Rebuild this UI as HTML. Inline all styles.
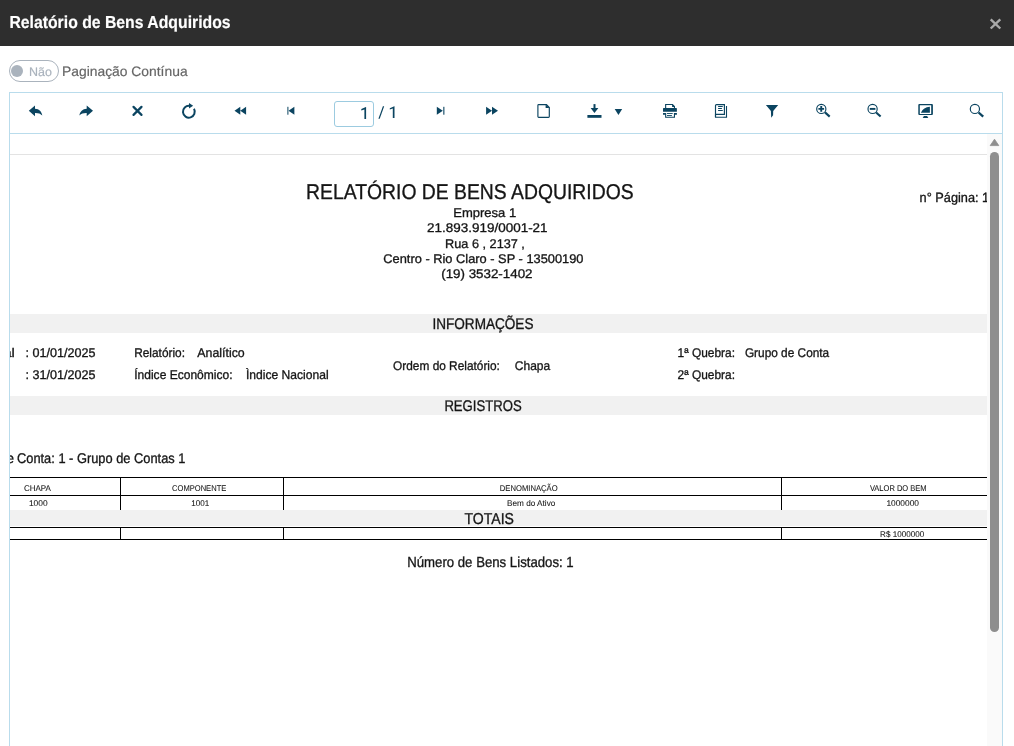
<!DOCTYPE html>
<html><head><meta charset="utf-8">
<style>
html,body{margin:0;padding:0;width:1014px;height:746px;overflow:hidden;background:#fff;font-family:"Liberation Sans",sans-serif;}
.abs{position:absolute;}
#hdr{left:0;top:0;width:1014px;height:46px;background:#2e2e2e;}
#pill{left:9px;top:60px;width:48px;height:20px;border:1px solid #aab3bd;border-radius:11px;box-sizing:content-box;}
#knob{left:11px;top:65px;width:12px;height:12px;border-radius:50%;background:#aab3bd;}
#box{left:9px;top:92px;width:992px;height:700px;border:1px solid #b9dcec;box-sizing:content-box;}
#tbline{left:10px;top:133px;width:992px;height:1px;background:#b9dcec;}
#pginput{left:334px;top:101px;width:38px;height:24px;border:1px solid #9ccbe0;border-radius:3px;}
#track{left:987px;top:134px;width:15px;height:612px;background:#fafafa;}
#thumb{left:990px;top:152px;width:9px;height:480px;border-radius:4.5px;background:#8e8e8e;}
#gline{left:10px;top:154px;width:977px;height:1px;background:#e3e3e3;}
.band{left:10px;width:977px;background:#f1f1f1;}
</style></head><body>
<div id="hdr" class="abs"></div>
<div id="pill" class="abs"></div>
<div id="knob" class="abs"></div>
<div id="box" class="abs"></div>
<div id="tbline" class="abs"></div>
<div id="pginput" class="abs"></div>
<div id="gline" class="abs"></div>
<div class="abs band" style="top:314px;height:19px"></div>
<div class="abs band" style="top:396px;height:19px"></div>
<div class="abs band" style="top:510px;height:16px"></div>
<div class="abs" style="left:10px;top:477px;width:977px;height:1px;background:#000"></div>
<div class="abs" style="left:10px;top:495px;width:977px;height:1px;background:#000"></div>
<div class="abs" style="left:10px;top:527px;width:977px;height:1px;background:#000"></div>
<div class="abs" style="left:10px;top:539px;width:977px;height:1px;background:#000"></div>
<div class="abs" style="left:120px;top:477px;width:1px;height:33px;background:#000"></div>
<div class="abs" style="left:283px;top:477px;width:1px;height:33px;background:#000"></div>
<div class="abs" style="left:781px;top:477px;width:1px;height:33px;background:#000"></div>
<div class="abs" style="left:120px;top:527px;width:1px;height:13px;background:#000"></div>
<div class="abs" style="left:283px;top:527px;width:1px;height:13px;background:#000"></div>
<div class="abs" style="left:781px;top:527px;width:1px;height:13px;background:#000"></div>
<svg class="abs" style="left:0;top:0;will-change:transform" width="1014" height="746" viewBox="0 0 1014 746" text-rendering="geometricPrecision">
<defs><clipPath id="rep"><rect x="10" y="134" width="977" height="612"/></clipPath></defs>
<path d="M28.8 110.8 L35 105.4 L35 108.8 C39.3 108.9 41.8 111.8 42.3 115.6 C40.5 113.5 38.2 112.9 35 113 L35 116.2 Z" fill="#0b4460"/>
<path d="M93 110.8 L86.7 105.4 L86.7 108.8 C82.6 108.9 80 111.8 79.4 115.5 C81.4 113.5 83.6 112.9 86.7 113 L86.7 116.2 Z" fill="#0b4460"/>
<path d="M133.5 106.9 L141.5 114.9 M141.5 106.9 L133.5 114.9" stroke="#0b4460" stroke-width="2.2" stroke-linecap="round"/>
<path d="M189.6 105.9 A5.9 5.9 0 1 0 194.0 108.85" fill="none" stroke="#0b4460" stroke-width="2"/>
<path d="M189 103.1 L193.1 105.8 L189 108.5 Z" fill="#0b4460"/>
<path d="M234.5 110.75 L240.3 106.8 L240.3 114.7 Z M240.3 110.75 L246.1 106.8 L246.1 114.7 Z" fill="#0b4460"/>
<rect x="287.4" y="106.8" width="1" height="7.9" fill="#0b4460"/><path d="M288.5 110.75 L294.4 106.8 L294.4 114.7 Z" fill="#0b4460"/>
<path d="M366.1 107.1 L366.1 118.9 L364.4 118.9 L364.4 109.5 L361.3 110.5 L361.3 109.1 L365.9 107.1 Z" fill="#0b4460"/>
<path d="M378.4 118.7 L379.7 118.7 L384.2 106.3 L382.9 106.3 Z" fill="#0b4460"/>
<path d="M394.5 106.2 L394.5 117.9 L392.8 117.9 L392.8 108.6 L389.8 109.6 L389.8 108.2 L394.3 106.2 Z" fill="#0b4460"/>
<path d="M442.8 110.75 L436.8 106.8 L436.8 114.7 Z" fill="#0b4460"/><rect x="443.3" y="106.8" width="1.1" height="7.9" fill="#0b4460"/>
<path d="M486.1 106.8 L492 110.75 L486.1 114.7 Z M492 106.8 L498 110.75 L492 114.7 Z" fill="#0b4460"/>
<path d="M537.9 105.3 Q537.9 104.55 538.7 104.55 L546.5 104.55 L549.3 107.4 L549.3 116.5 Q549.3 117.3 548.5 117.3 L538.7 117.3 Q537.9 117.3 537.9 116.5 Z" fill="none" stroke="#0b4460" stroke-width="1.15"/><path d="M545.6 104.3 L549.6 108.1 L545.6 108.1 Z" fill="#0b4460"/>
<rect x="593.5" y="104.1" width="2" height="5" fill="#0b4460"/><path d="M590.6 108 L598.4 108 L594.5 112.9 Z" fill="#0b4460"/><rect x="587.4" y="115" width="14.1" height="2.8" fill="#0b4460"/>
<path d="M614.7 108.9 L622.2 108.9 L618.45 115 Z" fill="#0b4460"/>
<path d="M665.65 108.3 L665.65 104.55 L672.5 104.55 L674.45 106.5 L674.45 108.3" fill="none" stroke="#0b4460" stroke-width="1.1"/>
<path d="M672.1 104 L675 106.9 L672.1 106.9 Z" fill="#0b4460"/>
<path d="M663.6 108.1 L676.3 108.1 Q676.9 108.1 676.9 108.7 L676.9 114.75 L674.4 114.75 L674.4 113 L665.6 113 L665.6 114.75 L663 114.75 L663 108.7 Q663 108.1 663.6 108.1 Z M663 111.8 L676.9 111.8 L676.9 113 L663 113 Z" fill="#0b4460" fill-rule="evenodd"/>
<path d="M665.65 113 L665.65 117.3 L674.45 117.3 L674.45 113" fill="none" stroke="#0b4460" stroke-width="1.1"/>
<rect x="667" y="113.1" width="5.7" height="0.9" fill="#0b4460"/><rect x="667" y="115" width="4.9" height="0.9" fill="#0b4460"/>
<path d="M715.5 117 L715.5 105.6 Q715.5 104.6 716.5 104.6 L724.4 104.6 L724.4 114.4 L715.5 114.4" fill="none" stroke="#0b4460" stroke-width="1.15"/>
<path d="M715.5 114 L715.5 117.3 L726.5 117.3 L726.5 105.9" fill="none" stroke="#0b4460" stroke-width="1.1"/>
<rect x="718" y="105.9" width="4.9" height="1" rx="0.5" fill="#0b4460"/><rect x="718" y="108" width="4" height="1" rx="0.5" fill="#0b4460"/><rect x="718" y="110" width="4.9" height="1" rx="0.5" fill="#0b4460"/>
<path d="M765.9 104.9 L778.2 104.9 L773.2 110.9 L773.1 115.3 L771.2 117.8 L770.9 110.9 Z" fill="#0b4460"/>
<circle cx="821.3" cy="108.9" r="4.6" fill="none" stroke="#0b4460" stroke-width="1.15"/><path d="M825 112.4 L829.7 116.6" stroke="#0b4460" stroke-width="2.1"/><path d="M818.4 108.9 L824.1 108.9 M821.25 106.1 L821.25 111.7" stroke="#0b4460" stroke-width="1.9"/>
<circle cx="872.6" cy="108.9" r="4.6" fill="none" stroke="#0b4460" stroke-width="1.15"/><path d="M876.1 112.4 L880.6 116.6" stroke="#0b4460" stroke-width="2.1"/><path d="M869.8 108.9 L875.4 108.9" stroke="#0b4460" stroke-width="1.9"/>
<path fill-rule="evenodd" d="M919.3 103.9 L931.9 103.9 Q932.9 103.9 932.9 104.9 L932.9 114 Q932.9 115 931.9 115 L919.3 115 Q918.3 115 918.3 114 L918.3 104.9 Q918.3 103.9 919.3 103.9 Z M919.8 105.3 L919.8 113.9 L931.2 113.9 L931.2 105.3 Z" fill="#0b4460"/>
<path d="M920.9 112.8 Q923.3 107.3 929.9 106.8 L929.9 112.8 Z" fill="#0b4460"/>
<path d="M922.7 117.9 L923.9 116 L927.1 116 L928.3 117.9 Z" fill="#0b4460"/>
<circle cx="974.9" cy="108.9" r="4.6" fill="none" stroke="#0b4460" stroke-width="1.15"/><path d="M978.6 112.5 L983.2 116.7" stroke="#0b4460" stroke-width="2.3"/>
<path d="M990.7 19.4 L1000.3 28.5 M1000.3 19.4 L990.7 28.5" stroke="#a8a8a8" stroke-width="2.4"/>
<g font-family="Liberation Sans" clip-path="url(#rep)" stroke="#1a1a1a" stroke-width="0.32">
<text x="306.1" y="198.7" font-size="21.4" fill="#151515" stroke="#151515" font-weight="normal" textLength="327.5" lengthAdjust="spacingAndGlyphs">RELATÓRIO DE BENS ADQUIRIDOS</text>
<text x="453.2" y="216.9" font-size="12.6" fill="#151515" stroke="#151515" font-weight="normal" textLength="63.0" lengthAdjust="spacingAndGlyphs">Empresa 1</text>
<text x="427.1" y="231.9" font-size="12.6" fill="#151515" stroke="#151515" font-weight="normal" textLength="120.5" lengthAdjust="spacingAndGlyphs">21.893.919/0001-21</text>
<text x="445.1" y="247.7" font-size="12.6" fill="#151515" stroke="#151515" font-weight="normal" textLength="79.8" lengthAdjust="spacingAndGlyphs">Rua 6 , 2137 ,</text>
<text x="383.3" y="262.9" font-size="12.6" fill="#151515" stroke="#151515" font-weight="normal" textLength="200.2" lengthAdjust="spacingAndGlyphs">Centro - Rio Claro - SP - 13500190</text>
<text x="441.2" y="278.1" font-size="12.6" fill="#151515" stroke="#151515" font-weight="normal" textLength="91.3" lengthAdjust="spacingAndGlyphs">(19) 3532-1402</text>
<text x="919.6" y="202" font-size="13.4" fill="#151515" stroke="#151515" font-weight="normal" textLength="69.6" lengthAdjust="spacingAndGlyphs">n° Página: 1</text>
<text x="432.4" y="329" font-size="15.4" fill="#151515" stroke="#151515" font-weight="normal" textLength="101.1" lengthAdjust="spacingAndGlyphs">INFORMAÇÕES</text>
<text x="444.4" y="411" font-size="15.4" fill="#151515" stroke="#151515" font-weight="normal" textLength="77.3" lengthAdjust="spacingAndGlyphs">REGISTROS</text>
<text x="3.4" y="357" font-size="12.6" fill="#151515" stroke="#151515" font-weight="normal" textLength="11.4" lengthAdjust="spacingAndGlyphs">al</text>
<text x="25.6" y="357" font-size="12.6" fill="#151515" stroke="#151515" font-weight="normal" textLength="69.9" lengthAdjust="spacingAndGlyphs">: 01/01/2025</text>
<text x="25.6" y="378.8" font-size="12.6" fill="#151515" stroke="#151515" font-weight="normal" textLength="69.9" lengthAdjust="spacingAndGlyphs">: 31/01/2025</text>
<text x="134.2" y="357" font-size="12.6" fill="#151515" stroke="#151515" font-weight="normal" textLength="50.8" lengthAdjust="spacingAndGlyphs">Relatório:</text>
<text x="197.3" y="357" font-size="12.6" fill="#151515" stroke="#151515" font-weight="normal" textLength="47.4" lengthAdjust="spacingAndGlyphs">Analítico</text>
<text x="134.2" y="378.8" font-size="12.6" fill="#151515" stroke="#151515" font-weight="normal" textLength="98.4" lengthAdjust="spacingAndGlyphs">Índice Econômico:</text>
<text x="245.9" y="378.8" font-size="12.6" fill="#151515" stroke="#151515" font-weight="normal" textLength="82.7" lengthAdjust="spacingAndGlyphs">Ìndice Nacional</text>
<text x="393.1" y="369.8" font-size="12.6" fill="#151515" stroke="#151515" font-weight="normal" textLength="106.8" lengthAdjust="spacingAndGlyphs">Ordem do Relatório:</text>
<text x="514.8" y="369.8" font-size="12.6" fill="#151515" stroke="#151515" font-weight="normal" textLength="35.4" lengthAdjust="spacingAndGlyphs">Chapa</text>
<text x="677.6" y="356.9" font-size="12.6" fill="#151515" stroke="#151515" font-weight="normal" textLength="57.4" lengthAdjust="spacingAndGlyphs">1ª Quebra:</text>
<text x="744.9" y="356.9" font-size="12.6" fill="#151515" stroke="#151515" font-weight="normal" textLength="84.3" lengthAdjust="spacingAndGlyphs">Grupo de Conta</text>
<text x="677.6" y="378.6" font-size="12.6" fill="#151515" stroke="#151515" font-weight="normal" textLength="57.4" lengthAdjust="spacingAndGlyphs">2ª Quebra:</text>
<text x="6.4" y="462.8" font-size="14" fill="#151515" stroke="#151515" font-weight="normal" textLength="7.5" lengthAdjust="spacingAndGlyphs">e</text>
<text x="17.0" y="462.8" font-size="14" fill="#151515" stroke="#151515" font-weight="normal" textLength="168.4" lengthAdjust="spacingAndGlyphs">Conta: 1 - Grupo de Contas 1</text>
<text x="23.9" y="490.8" font-size="8.4" fill="#151515" stroke="#151515" font-weight="normal" textLength="27.0" lengthAdjust="spacingAndGlyphs" stroke-width="0.08">CHAPA</text>
<text x="172.1" y="490.8" font-size="8.4" fill="#151515" stroke="#151515" font-weight="normal" textLength="54.2" lengthAdjust="spacingAndGlyphs" stroke-width="0.08">COMPONENTE</text>
<text x="499.8" y="490.8" font-size="8.4" fill="#151515" stroke="#151515" font-weight="normal" textLength="57.8" lengthAdjust="spacingAndGlyphs" stroke-width="0.08">DENOMINAÇÃO</text>
<text x="869.9" y="490.8" font-size="8.4" fill="#151515" stroke="#151515" font-weight="normal" textLength="56.7" lengthAdjust="spacingAndGlyphs" stroke-width="0.08">VALOR DO BEM</text>
<text x="28.9" y="505.9" font-size="8.4" fill="#151515" stroke="#151515" font-weight="normal" textLength="18.7" lengthAdjust="spacingAndGlyphs" stroke-width="0.08">1000</text>
<text x="191.2" y="505.9" font-size="8.4" fill="#151515" stroke="#151515" font-weight="normal" textLength="18.0" lengthAdjust="spacingAndGlyphs" stroke-width="0.08">1001</text>
<text x="507.1" y="505.9" font-size="8.4" fill="#151515" stroke="#151515" font-weight="normal" textLength="48.2" lengthAdjust="spacingAndGlyphs" stroke-width="0.08">Bem do Ativo</text>
<text x="886.4" y="505.9" font-size="8.4" fill="#151515" stroke="#151515" font-weight="normal" textLength="32.6" lengthAdjust="spacingAndGlyphs" stroke-width="0.08">1000000</text>
<text x="464.5" y="524.2" font-size="15.8" fill="#151515" stroke="#151515" font-weight="normal" textLength="49.5" lengthAdjust="spacingAndGlyphs">TOTAIS</text>
<text x="880.1" y="537" font-size="8.4" fill="#151515" stroke="#151515" font-weight="normal" textLength="44.1" lengthAdjust="spacingAndGlyphs" stroke-width="0.08">R$ 1000000</text>
<text x="407.2" y="567.2" font-size="14.6" fill="#151515" stroke="#151515" font-weight="normal" textLength="166.5" lengthAdjust="spacingAndGlyphs">Número de Bens Listados: 1</text>
</g>
<g font-family="Liberation Sans" stroke-width="0.18">
<text x="9.4" y="28" font-size="17.4" fill="#ffffff" stroke="#ffffff" font-weight="bold" textLength="221.2" lengthAdjust="spacingAndGlyphs">Relatório de Bens Adquiridos</text>
<text x="29.0" y="75.7" font-size="12.2" fill="#aab3bd" stroke="#aab3bd" font-weight="normal" textLength="22.9" lengthAdjust="spacingAndGlyphs">Não</text>
<text x="62.0" y="75.7" font-size="13.7" fill="#666666" stroke="#666666" font-weight="normal" textLength="125.6" lengthAdjust="spacingAndGlyphs">Paginação Contínua</text>
</g>
</svg>
<div id="track" class="abs"></div>
<svg class="abs" style="left:0;top:0" width="1014" height="746" viewBox="0 0 1014 746">
<path d="M994.5 139.2 L998.8 145.6 L990.2 145.6 Z" fill="#8e8e8e" stroke="#8e8e8e" stroke-width="0.8" stroke-linejoin="round"/>
</svg>
<div id="thumb" class="abs"></div>
</body></html>
